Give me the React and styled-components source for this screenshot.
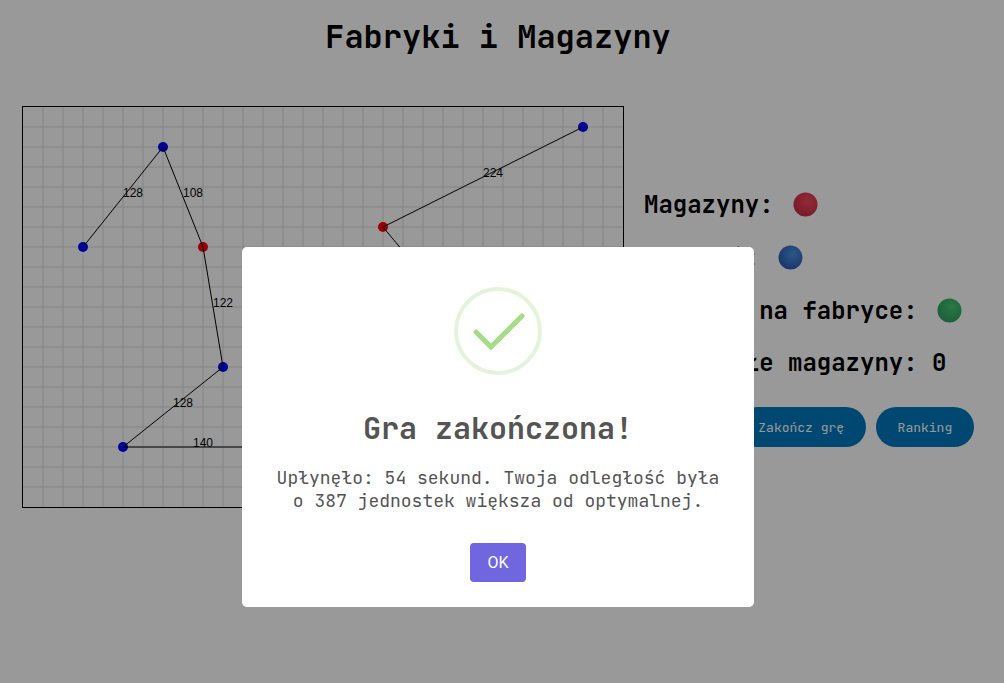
import React from "react";
import styled, { createGlobalStyle } from "styled-components";

const MONO = '"JetBrains Mono", "DejaVu Sans Mono", "Liberation Mono", monospace';
const SANS = '"Liberation Sans", Arial, sans-serif';

const GlobalStyle = createGlobalStyle`
  *, *::before, *::after { box-sizing: border-box; }
  body {
    margin: 0;
    background: #fff;
    color: #000;
    font-family: ${MONO};
  }
`;

const Page = styled.div`
  min-height: 100vh;
  padding-right: 8px;
`;

const Title = styled.h1`
  margin: 0;
  padding: 16px 0 48px;
  font-size: 32px;
  line-height: 42px;
  text-align: center;
`;

const Game = styled.main`
  display: flex;
  justify-content: center;
  align-items: center;
  gap: 20px;
`;

const Board = styled.svg`
  flex: none;
  width: 602px;
  height: 402px;
  border: 1px solid #000;
`;

const BoardLabel = styled.text`
  font-family: ${SANS};
  font-size: 12px;
`;

const Panel = styled.aside`
  display: flex;
  flex-direction: column;
  gap: 20px;
  width: 330px;
  padding-top: 21px;
`;

const Info = styled.p`
  display: flex;
  align-items: center;
  gap: 19px;
  margin: 0;
  font-size: 24px;
  font-weight: 700;
  line-height: ${({ $plain }) => ($plain ? "31px" : "33px")};
  white-space: pre;
`;

const Ball = styled.svg`
  width: 25px;
  height: 25px;
`;

const Actions = styled.div`
  display: flex;
  gap: 10px;
  padding-top: 9px;
`;

const ActionButton = styled.button`
  flex: 1 1 auto;
  height: 40px;
  padding: 0 20px;
  border: 0;
  border-radius: 20px;
  background: #0077be;
  color: #fff;
  font-family: ${MONO};
  font-size: 13px;
  white-space: nowrap;
`;

const Backdrop = styled.div`
  position: fixed;
  inset: 0;
  display: flex;
  align-items: center;
  justify-content: center;
  padding: 171px 8px 0 0;
  background: rgba(0, 0, 0, 0.4);
`;

const Dialog = styled.section`
  display: flex;
  flex-direction: column;
  align-items: center;
  width: 512px;
  max-width: 100%;
  padding: 40px 29px 25px;
  border-radius: 5px;
  background: #fff;
  color: #545454;
  text-align: center;
`;

const SuccessIcon = styled.svg`
  width: 88px;
  height: 88px;
`;

const DialogTitle = styled.h2`
  margin: 0;
  padding-top: 33px;
  font-size: 30px;
  font-weight: 600;
  line-height: 40px;
`;

const DialogText = styled.p`
  margin: 0;
  padding: 18px 0 31px;
  font-size: 18px;
  line-height: 23px;
`;

const ConfirmButton = styled.button`
  min-width: 56px;
  height: 39px;
  padding: 0 17px;
  border: 0;
  border-radius: 4px;
  background: #7066e0;
  color: #fff;
  font-family: Roboto, ${SANS};
  font-size: 16px;
`;

const points = [
  { x: 560, y: 20, color: "#0000ff" },
  { x: 360, y: 120, color: "#ff0000" },
  { x: 140, y: 40, color: "#0000ff" },
  { x: 60, y: 140, color: "#0000ff" },
  { x: 180, y: 140, color: "#ff0000" },
  { x: 200, y: 260, color: "#0000ff" },
  { x: 100, y: 340, color: "#0000ff" },
  { x: 240, y: 340, color: "#0000ff" },
  { x: 460, y: 240, color: "#0000ff" },
];

const routes = [
  [0, 1, 224],
  [1, 8, 156],
  [2, 3, 128],
  [2, 4, 108],
  [4, 5, 122],
  [5, 6, 128],
  [6, 7, 140],
];

const columns = Array.from({ length: 29 }, (_, i) => (i + 1) * 20);
const rows = Array.from({ length: 19 }, (_, i) => (i + 1) * 20);

function GameBoard() {
  return (
    <Board viewBox="0 0 600 400" role="img" aria-label="Plansza">
      <g stroke="#ddd">
        {columns.map((x) => <line key={x} x1={x} y1="0" x2={x} y2="400" />)}
        {rows.map((y) => <line key={y} x1="0" y1={y} x2="600" y2={y} />)}
      </g>
      {points.map((p) => <circle key={`${p.x}-${p.y}`} cx={p.x} cy={p.y} r="5" fill={p.color} />)}
      {routes.map(([a, b, length]) => {
        const from = points[a];
        const to = points[b];
        return (
          <g key={`${a}-${b}`}>
            <line x1={from.x} y1={from.y} x2={to.x} y2={to.y} stroke="#000" />
            <BoardLabel x={(from.x + to.x) / 2} y={(from.y + to.y) / 2}>{length}</BoardLabel>
          </g>
        );
      })}
    </Board>
  );
}

function ColorBall({ id, light, dark }) {
  return (
    <Ball viewBox="0 0 25 25" aria-hidden="true">
      <defs>
        <radialGradient id={id} cx="0.6" cy="0.35" r="0.7">
          <stop offset="0" stopColor={light} />
          <stop offset="1" stopColor={dark} />
        </radialGradient>
      </defs>
      <circle cx="12.5" cy="12.5" r="12" fill={`url(#${id})`} />
    </Ball>
  );
}

export default function App() {
  return (
    <>
      <GlobalStyle />
      <Page>
        <Title>Fabryki i Magazyny</Title>
        <Game>
          <GameBoard />
          <Panel>
            <Info>Magazyny:<ColorBall id="red" light="#f8485c" dark="#c42c44" /></Info>
            <Info>Fabryki:<ColorBall id="blue" light="#4a90dc" dark="#2c58b4" /></Info>
            <Info>Magazyn na fabryce:<ColorBall id="green" light="#48c878" dark="#2c9c60" /></Info>
            <Info $plain>Pozostałe magazyny: 0</Info>
            <Actions>
              <ActionButton type="button">Start</ActionButton>
              <ActionButton type="button">Zakończ grę</ActionButton>
              <ActionButton type="button">Ranking</ActionButton>
            </Actions>
          </Panel>
        </Game>
      </Page>
      <Backdrop>
        <Dialog role="dialog" aria-modal="true" aria-labelledby="dialog-title">
          <SuccessIcon viewBox="0 0 88 88" fill="none" aria-hidden="true">
            <circle cx="44" cy="44" r="42" stroke="#a5dc86" strokeOpacity="0.3" strokeWidth="4" />
            <path d="M22 45 37 60 68 29" stroke="#a5dc86" strokeWidth="5" strokeLinecap="round" />
          </SuccessIcon>
          <DialogTitle id="dialog-title">Gra zakończona!</DialogTitle>
          <DialogText>Upłynęło: 54 sekund. Twoja odległość była o 387 jednostek większa od optymalnej.</DialogText>
          <ConfirmButton type="button">OK</ConfirmButton>
        </Dialog>
      </Backdrop>
    </>
  );
}
